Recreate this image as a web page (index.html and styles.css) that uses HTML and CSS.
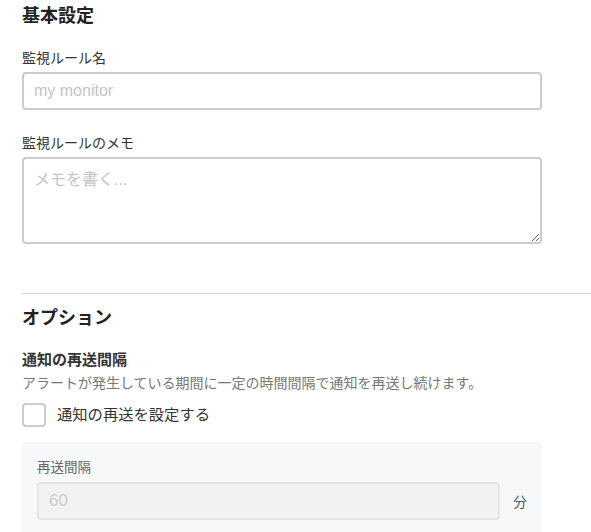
FILE: index.html
```html
<!DOCTYPE html>
<html lang="ja">
<head>
    <meta charset="UTF-8">
    <meta name="viewport" content="width=device-width, initial-scale=1.0">
    <title>監視ルール</title>
    <link rel="stylesheet" href="styles.css">
</head>
<body>
    <section class="section">
        <h2 class="section-title">基本設定</h2>
        <div class="form-group">
            <label class="field-label" for="monitor-name">監視ルール名</label>
            <input class="text-input" type="text" id="monitor-name" placeholder="my monitor">
        </div>
        <div class="form-group">
            <label class="field-label" for="monitor-memo">監視ルールのメモ</label>
            <textarea class="text-area" id="monitor-memo" placeholder="メモを書く..."></textarea>
        </div>
    </section>

    <hr class="divider">

    <section class="section">
        <h2 class="section-title options-title">オプション</h2>
        <div class="option">
            <div class="option-name">通知の再送間隔</div>
            <div class="option-desc">アラートが発生している期間に一定の時間間隔で通知を再送し続けます。</div>
            <label class="checkbox">
                <input type="checkbox" id="resend">
                <span class="checkbox-box"></span>
                <span>通知の再送を設定する</span>
            </label>
            <div class="sub-panel">
                <label class="sub-label" for="resend-interval">再送間隔</label>
                <div class="unit-row">
                    <input class="text-input disabled-input" type="text" id="resend-interval" placeholder="60" disabled>
                    <span class="unit">分</span>
                </div>
            </div>
        </div>
    </section>
</body>
</html>
```

FILE: styles.css
```css
body {
    font-family: "Liberation Sans", "Noto Sans CJK JP", sans-serif;
    color: #333;
    margin: 0;
    padding: 4px 0 0 22px;
    background-color: #fff;
}
.section-title {
    font-size: 18px;
    line-height: 25px;
    font-weight: bold;
    margin: 0;
    color: #222;
}
.form-group {
    margin-top: 19px;
    max-width: 520px;
}
.form-group + .form-group {
    margin-top: 23px;
}
.field-label {
    display: block;
    font-size: 14px;
    line-height: 20px;
    margin-bottom: 4px;
}
.text-input {
    display: block;
    width: 100%;
    height: 38px;
    box-sizing: border-box;
    border: 2px solid #ccc;
    border-radius: 4px;
    padding: 0 10px;
    font-family: inherit;
    font-size: 16px;
    color: #333;
    background-color: #fff;
}
.text-input::placeholder,
.text-area::placeholder {
    color: #c4c4c4;
}
.text-area {
    display: block;
    width: 100%;
    height: 87px;
    box-sizing: border-box;
    border: 2px solid #ccc;
    border-radius: 4px;
    padding: 7px 10px;
    font-family: inherit;
    font-size: 16px;
}
.divider {
    border: none;
    border-top: 1px solid #d4d4d4;
    margin: 49px 0 0 0;
}
.options-title {
    margin-top: 12px;
}
.option {
    margin-top: 18px;
}
.option-name {
    font-size: 15px;
    line-height: 22px;
    font-weight: bold;
}
.option-desc {
    font-size: 14px;
    line-height: 20px;
    color: #777;
    margin-top: 2px;
}
.checkbox {
    display: flex;
    align-items: center;
    gap: 11px;
    margin-top: 10px;
    font-size: 15.3px;
    line-height: 24px;
    cursor: pointer;
}
.checkbox input {
    display: none;
}
.checkbox-box {
    width: 24px;
    height: 24px;
    box-sizing: border-box;
    border: 2px solid #ccc;
    border-radius: 4px;
    background-color: #fff;
}
.sub-panel {
    margin-top: 15px;
    max-width: 520px;
    box-sizing: border-box;
    background-color: #f7f8fa;
    border-radius: 4px;
    padding: 16px 15px;
}
.sub-label {
    display: block;
    font-size: 13.5px;
    line-height: 20px;
    color: #666;
    margin-bottom: 4px;
}
.unit-row {
    display: flex;
    align-items: center;
    gap: 13px;
}
.disabled-input {
    flex: 1;
    background-color: #f2f2f2;
    border-color: #e6e6e6;
    font-size: 17px;
}
.disabled-input::placeholder {
    color: #ccc;
}
.unit {
    font-size: 14px;
    color: #555;
}
```
